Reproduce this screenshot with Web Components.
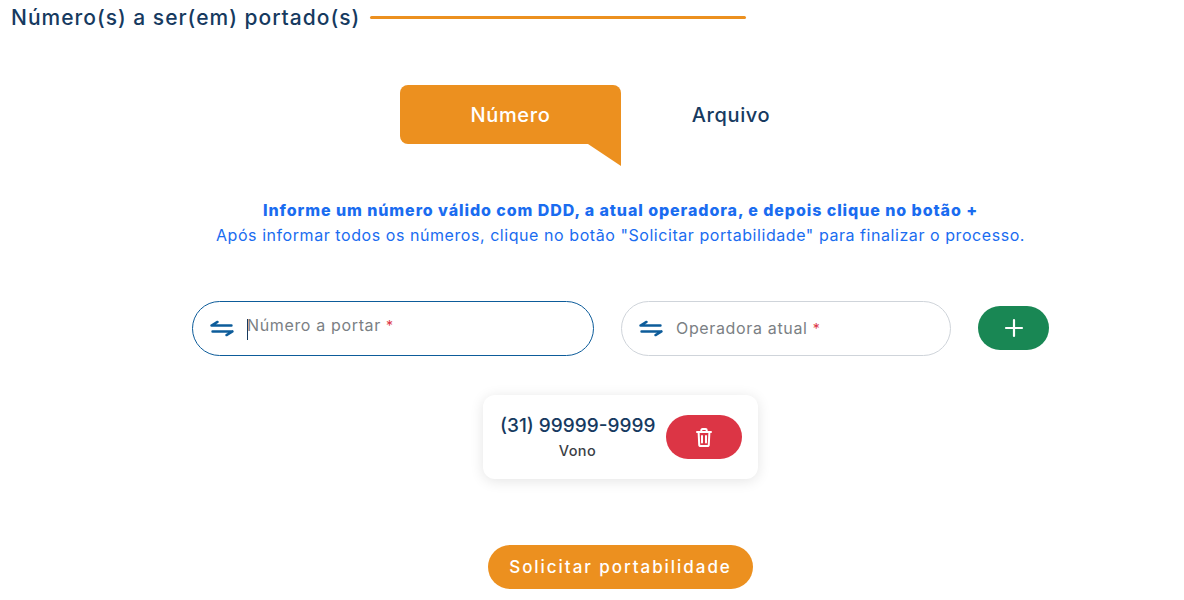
<!DOCTYPE html>
<html lang="pt-BR">
<head>
<meta charset="utf-8">
<title>Portabilidade</title>
<style>
  html, body { margin: 0; height: 600px; overflow: hidden; background: #fff; }
  body { font-family: "Inter", "Open Sans", sans-serif; color: #163a5f; }
</style>
</head>
<body>
<porta-page>
  <section-title slot="title">Número(s) a ser(em) portado(s)</section-title>
  <tab-switch slot="tabs"></tab-switch>
  <info-text slot="info"
    lead="Informe um número válido com DDD, a atual operadora, e depois clique no botão +"
    rest='Após informar todos os números, clique no botão "Solicitar portabilidade" para finalizar o processo.'></info-text>
  <number-form slot="form"></number-form>
  <number-card slot="card" numero="(31) 99999-9999" operadora="Vono"></number-card>
  <submit-button slot="submit">Solicitar portabilidade</submit-button>
</porta-page>

<script>
const swapIcon = `
  <svg width="24" height="18" viewBox="0 0 24 18" fill="none" stroke="#0d5c9a" stroke-width="2.4" stroke-linecap="round" stroke-linejoin="round">
    <path d="M1.5 5.5h20M1.5 5.5l6-3.6"/>
    <path d="M22.5 11.5h-20M22.5 11.5l-6 3.6"/>
  </svg>`;

class PortaPage extends HTMLElement {
  constructor() {
    super();
    this.attachShadow({ mode: 'open' });
    this.shadowRoot.innerHTML = `
      <style>
        :host { display: block; height: 600px; }
        .head { padding: 5px 0 0 11px; height: 85px; box-sizing: border-box; }
        main { padding-left: 57px; display: flex; flex-direction: column; align-items: center; }
        .tabs { height: 81px; }
        .info { margin-top: 32px; height: 75px; }
        .form { margin-top: 28px; height: 55px; }
        .card { margin-top: 39px; height: 84px; }
        .submit { margin-top: 66px; }
      </style>
      <div class="head"><slot name="title"></slot></div>
      <main>
        <div class="tabs"><slot name="tabs"></slot></div>
        <div class="info"><slot name="info"></slot></div>
        <div class="form"><slot name="form"></slot></div>
        <div class="card"><slot name="card"></slot></div>
        <div class="submit"><slot name="submit"></slot></div>
      </main>`;
  }
}

class SectionTitle extends HTMLElement {
  constructor() {
    super();
    this.attachShadow({ mode: 'open' });
    this.shadowRoot.innerHTML = `
      <style>
        :host { display: flex; align-items: center; gap: 12px; font-size: 21px; font-weight: 450; line-height: 25px; color: #163a5f; letter-spacing: 1px; }
        span { width: 347px; white-space: nowrap; }
        i { display: block; width: 376px; height: 3px; background: #ec901f; border-radius: 2px; }
      </style>
      <span><slot></slot></span><i></i>`;
  }
}

class TabSwitch extends HTMLElement {
  constructor() {
    super();
    this.attachShadow({ mode: 'open' });
    this.shadowRoot.innerHTML = `
      <style>
        :host { display: flex; font-size: 20px; font-weight: 450; letter-spacing: .65px; }
        div { width: 221px; height: 59px; display: flex; align-items: center; justify-content: center; }
        .on { position: relative; background: #ec901f; color: #fff; border-radius: 8px 8px 0 8px; }
        .on::after { content: ""; position: absolute; right: 0; top: 59px; width: 33px; height: 22px;
          background: #ec901f; clip-path: polygon(0 0, 100% 0, 100% 100%); }
        .off { color: #163a5f; width: 220px; }
      </style>
      <div class="on">Número</div><div class="off">Arquivo</div>`;
  }
}

class InfoText extends HTMLElement {
  constructor() {
    super();
    this.attachShadow({ mode: 'open' });
    this.shadowRoot.innerHTML = `
      <style>
        :host { display: block; text-align: center; color: #1a6cf0; font-size: 16px; line-height: 25px; white-space: nowrap; }
        b { display: block; font-weight: 800; letter-spacing: .92px; }
        span { letter-spacing: .56px; }
      </style>
      <b>${this.getAttribute('lead')}</b>
      <span>${this.getAttribute('rest')}</span>`;
  }
}

class NumberForm extends HTMLElement {
  constructor() {
    super();
    this.attachShadow({ mode: 'open' });
    this.shadowRoot.innerHTML = `
      <style>
        :host { display: flex; align-items: center; gap: 27px; }
        .field { box-sizing: border-box; height: 55px; border-radius: 28px; background: #fff; display: flex; align-items: center;
          border: 1px solid #cfd4da; padding-left: 17px; font-size: 16px; color: #7b7f84; white-space: nowrap; letter-spacing: .65px; }
        .field svg { flex: none; margin-right: 13px; }
        .field span { position: relative; top: -1px; }
        .num { width: 402px; border-color: #0d5c9a; }
        .num span { top: -4px; }
        .num span::before { content: ""; position: absolute; left: 0; top: 4px; width: 1px; height: 21px; background: #163a5f; }
        .op { width: 330px; }
        em { color: #dc3545; font-style: normal; font-size: 14px; }
        button { width: 71px; height: 44px; margin-top: -1px; border: 0; border-radius: 22px; background: #198754; display: flex; align-items: center; justify-content: center; padding: 0; }
      </style>
      <div class="field num">${swapIcon}<span>Número a portar <em>*</em></span></div>
      <div class="field op">${swapIcon}<span>Operadora atual <em>*</em></span></div>
      <button aria-label="Adicionar">
        <svg width="20" height="20" viewBox="0 0 20 20" stroke="#fff" stroke-width="2.2" stroke-linecap="round"><path d="M10 2v16M2 10h16"/></svg>
      </button>`;
  }
}

class NumberCard extends HTMLElement {
  constructor() {
    super();
    this.attachShadow({ mode: 'open' });
    this.shadowRoot.innerHTML = `
      <style>
        :host { display: flex; box-sizing: border-box; width: 275px; height: 84px; align-items: center; gap: 11px; padding-left: 17px;
          background: #fff; border-radius: 12px; box-shadow: 0 2px 14px rgba(0,0,0,.11); }
        .txt { width: 155px; text-align: center; white-space: nowrap; }
        .n { font-size: 19px; line-height: 24px; font-weight: 450; color: #163a5f; letter-spacing: 0; }
        .o { font-size: 14.5px; line-height: 18px; margin-top: 4px; font-weight: 450; color: #3b4046; letter-spacing: .45px; }
        button { width: 76px; height: 44px; border: 0; border-radius: 22px; background: #dc3545; display: flex; align-items: center; justify-content: center; padding: 0 1px 0 0; }
      </style>
      <div class="txt"><div class="n">${this.getAttribute('numero')}</div><div class="o">${this.getAttribute('operadora')}</div></div>
      <button aria-label="Excluir">
        <svg width="16" height="19" viewBox="0 0 16 19" fill="none" stroke="#fff" stroke-width="2" stroke-linecap="round" stroke-linejoin="round">
          <path d="M1 4h14M5.3 4V2.2c0-.6.5-1.2 1.2-1.2h3c.7 0 1.2.6 1.2 1.2V4"/>
          <path d="M2.6 4l.6 12.4c0 .9.7 1.6 1.6 1.6h6.4c.9 0 1.6-.7 1.6-1.6L13.4 4"/>
          <path d="M6 8v6.5M10 8v6.5"/>
        </svg>
      </button>`;
  }
}

class SubmitButton extends HTMLElement {
  constructor() {
    super();
    this.attachShadow({ mode: 'open' });
    this.shadowRoot.innerHTML = `
      <style>
        :host { display: flex; width: 265px; height: 44px; align-items: center; justify-content: center; border-radius: 22px;
          background: #ec901f; color: #fff; font-size: 17px; font-weight: 450; letter-spacing: 1.95px; white-space: nowrap; }
      </style>
      <slot></slot>`;
  }
}

customElements.define('porta-page', PortaPage);
customElements.define('section-title', SectionTitle);
customElements.define('tab-switch', TabSwitch);
customElements.define('info-text', InfoText);
customElements.define('number-form', NumberForm);
customElements.define('number-card', NumberCard);
customElements.define('submit-button', SubmitButton);
</script>
</body>
</html>
